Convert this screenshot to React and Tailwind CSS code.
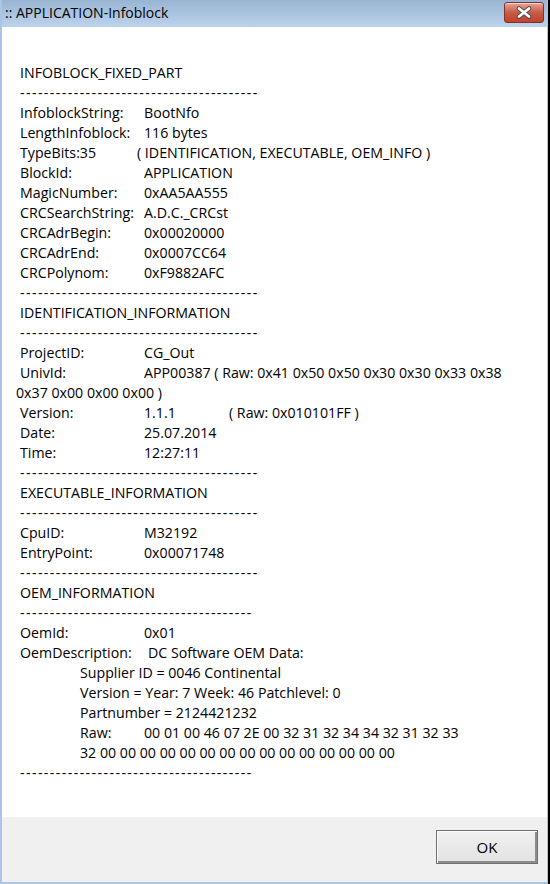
import React from "react";

const DASH40 = "----------------------------------------";
const DASH39 = "---------------------------------------";

function Line({ children, className = "" }) {
  return (
    <div className={"h-[20px] leading-[20px] whitespace-nowrap " + className}>
      {children}
    </div>
  );
}

function Row({ label, value, w = "w-[124px]" }) {
  return (
    <Line className="pl-[18px] flex">
      <span className={"shrink-0 " + w}>{label}</span>
      <span>{value}</span>
    </Line>
  );
}

function Dashes({ n = 40 }) {
  return (
    <Line className="pl-[18px]">
      <span className="tracking-[1.4px]">{n === 40 ? DASH40 : DASH39}</span>
    </Line>
  );
}

function Sub({ children }) {
  return <Line className="pl-[78px] flex">{children}</Line>;
}

export default function App() {
  return (
    <div
      className="w-[550px] h-[884px] bg-black flex text-black"
      style={{ fontFamily: "'Open Sans', 'Noto Sans', sans-serif" }}
    >
      <div className="w-[548px] h-[884px] flex flex-col border-l-[2px] border-r border-b-[2px] border-[#aac6e6]">
        {/* Title bar */}
        <div className="h-[27px] shrink-0 flex items-start bg-gradient-to-b from-[#99b4d3] to-[#bcd3ec]">
          <div className="pl-[3px] pt-[4px] text-[14px] leading-[18px] text-black">
            :: APPLICATION-Infoblock
          </div>
          <div className="ml-auto mr-[3px] mt-[2px] w-[40px] h-[21px] rounded-[3px] border border-[#7e3429] bg-gradient-to-b from-[#e5a69a] via-[#c85a44] to-[#c0412c] flex items-center justify-center shadow-[inset_0_1px_0_rgba(255,255,255,0.5)]">
            <svg width="16" height="13" viewBox="0 0 16 13">
              <path d="M3 2.5 L13 10.5 M13 2.5 L3 10.5" stroke="#4a4a4a" strokeWidth="4.6" strokeLinecap="round" />
              <path d="M3 2.5 L13 10.5 M13 2.5 L3 10.5" stroke="#ffffff" strokeWidth="2.8" strokeLinecap="round" />
            </svg>
          </div>
        </div>

        {/* Body */}
        <div className="flex-1 bg-white pt-[36px] text-[14.2px]">
          <Line className="pl-[18px]">INFOBLOCK_FIXED_PART</Line>
          <Dashes />
          <Row label="InfoblockString:" value="BootNfo" />
          <Row label="LengthInfoblock:" value="116 bytes" />
          <Row label="TypeBits:35" value="( IDENTIFICATION, EXECUTABLE, OEM_INFO )" w="w-[117px]" />
          <Row label="BlockId:" value="APPLICATION" />
          <Row label="MagicNumber:" value="0xAA5AA555" />
          <Row label="CRCSearchString:" value="A.D.C._CRCst" />
          <Row label="CRCAdrBegin:" value="0x00020000" />
          <Row label="CRCAdrEnd:" value="0x0007CC64" />
          <Row label="CRCPolynom:" value="0xF9882AFC" />
          <Dashes />
          <Line className="pl-[18px]">IDENTIFICATION_INFORMATION</Line>
          <Dashes />
          <Row label="ProjectID:" value="CG_Out" />
          <Row label="UnivId:" value="APP00387 ( Raw: 0x41 0x50 0x50 0x30 0x30 0x33 0x38" />
          <Line className="pl-[14px]">0x37 0x00 0x00 0x00 )</Line>
          <Line className="pl-[18px] flex">
            <span className="shrink-0 w-[124px]">Version:</span>
            <span className="shrink-0 w-[85px]">1.1.1</span>
            <span>( Raw: 0x010101FF )</span>
          </Line>
          <Row label="Date:" value="25.07.2014" />
          <Row label="Time:" value="12:27:11" />
          <Dashes />
          <Line className="pl-[18px]">EXECUTABLE_INFORMATION</Line>
          <Dashes />
          <Row label="CpuID:" value="M32192" />
          <Row label="EntryPoint:" value="0x00071748" />
          <Dashes />
          <Line className="pl-[18px]">OEM_INFORMATION</Line>
          <Dashes n={39} />
          <Row label="OemId:" value="0x01" />
          <Row label="OemDescription:" value="DC Software OEM Data:" w="w-[128px]" />
          <Sub>Supplier ID = 0046 Continental</Sub>
          <Sub>Version = Year: 7 Week: 46 Patchlevel: 0</Sub>
          <Sub>Partnumber = 2124421232</Sub>
          <Sub>
            <span className="shrink-0 w-[64px]">Raw:</span>
            <span>00 01 00 46 07 2E 00 32 31 32 34 34 32 31 32 33</span>
          </Sub>
          <Sub>32 00 00 00 00 00 00 00 00 00 00 00 00 00 00 00</Sub>
          <Dashes n={39} />
        </div>

        {/* Footer */}
        <div className="h-[65px] shrink-0 bg-[#f0f0f0] flex justify-end items-start pt-[13px] pr-[9px]">
          <button className="w-[102px] h-[34px] border border-[#707070] bg-gradient-to-b from-[#f0f0f0] to-[#e3e3e3] shadow-[inset_1px_1px_0_#fcfcfc,inset_-2px_-2px_0_#8c8c8c] text-[15px] text-black flex items-center justify-center">
            OK
          </button>
        </div>
      </div>
    </div>
  );
}
